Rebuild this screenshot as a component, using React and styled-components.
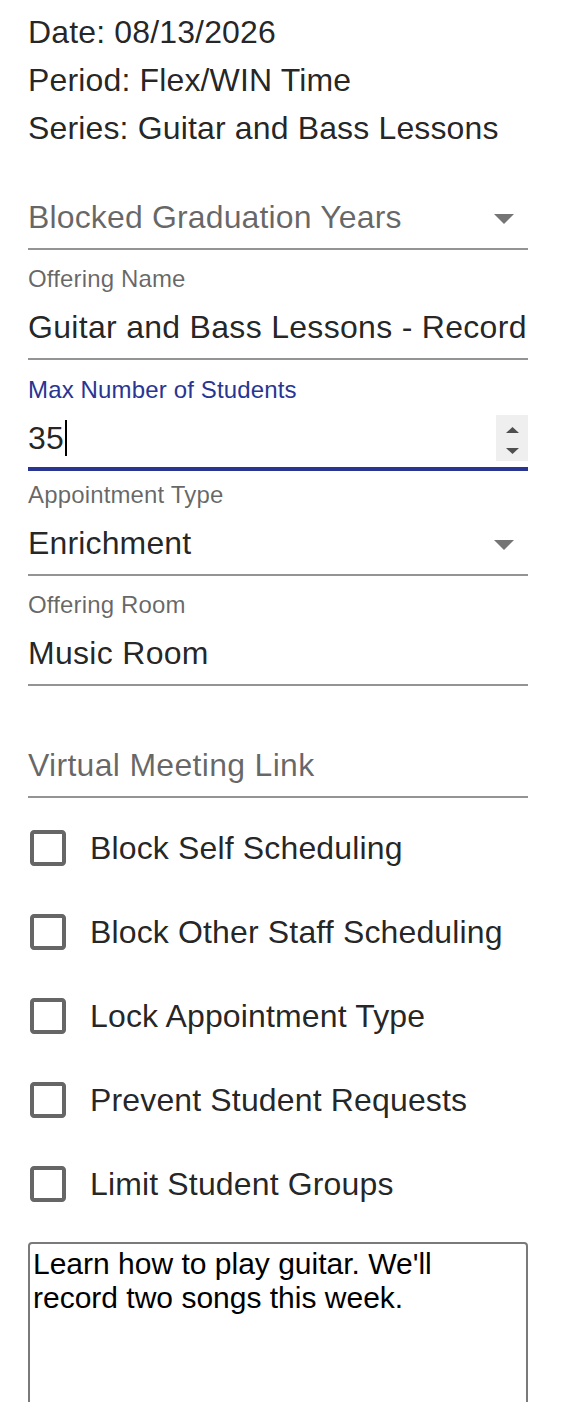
import React from 'react';
import styled, { createGlobalStyle } from 'styled-components';

const GlobalStyle = createGlobalStyle`
  html, body {
    margin: 0;
    padding: 0;
    height: 1402px;
    overflow: hidden;
    background: #fff;
  }
  body {
    font-family: "Liberation Sans", Arial, Helvetica, sans-serif;
  }
`

const Page = styled.div`
  width: 500px;
  padding: 8px 0 0 28px;
  display: flex;
  flex-direction: column;
  letter-spacing: 0.00938em;
`

const Info = styled.div`
  font-size: 32px;
  line-height: 48px;
  color: rgba(0, 0, 0, 0.87);
`

const Field = styled.div`
  margin-top: ${p => (p.$gap ?? 14)}px;
  padding-top: ${p => (p.$bare ? 32 : 0)}px;
`

const FieldLabel = styled.label`
  display: block;
  font-size: 24px;
  line-height: 29px;
  margin-bottom: 3px;
  white-space: nowrap;
  color: ${p => (p.$focused ? '#283593' : 'rgba(0, 0, 0, 0.6)')};
`

const InputRoot = styled.div`
  display: flex;
  align-items: center;
  height: 64px;
  box-sizing: border-box;
  padding-top: 8px;
  padding-bottom: ${p => (p.$focused ? 6 : 8)}px;
  border-bottom: ${p => (p.$focused ? '4px solid #283593' : '2px solid rgba(0, 0, 0, 0.42)')};
`

const TextInput = styled.input`
  flex: 1;
  min-width: 0;
  height: 46px;
  margin: 0;
  padding: 0;
  border: 0;
  outline: none;
  background: transparent;
  font-family: inherit;
  font-size: 32px;
  line-height: 46px;
  letter-spacing: 0.00938em;
  color: rgba(0, 0, 0, 0.87);

  &::placeholder {
    color: rgba(0, 0, 0, 0.6);
    opacity: 1;
  }
`

const SelectText = styled.div`
  flex: 1;
  min-width: 0;
  font-size: 32px;
  line-height: 46px;
  white-space: nowrap;
  overflow: hidden;
  color: ${p => (p.$placeholder ? 'rgba(0, 0, 0, 0.6)' : 'rgba(0, 0, 0, 0.87)')};
`

const ArrowSvg = styled.svg`
  flex-shrink: 0;
  width: 48px;
  height: 48px;
  margin-top: 2px;
  fill: rgba(0, 0, 0, 0.54);
`

const NumberText = styled.div`
  flex: 1;
  display: flex;
  align-items: center;
  height: 46px;
  font-size: 32px;
  line-height: 46px;
  color: rgba(0, 0, 0, 0.87);
`

const Caret = styled.span`
  display: inline-block;
  width: 2px;
  height: 36px;
  margin-left: 1px;
  background: #000;
`

const Spinner = styled.div`
  width: 32px;
  height: 46px;
  flex-shrink: 0;
  background: #efefef;

  svg {
    display: block;
    fill: #4f4f4f;
  }
`

const Checks = styled.div`
  margin-top: 8px;
  margin-left: -22px;
  display: flex;
  flex-direction: column;
`

const CheckRow = styled.label`
  display: flex;
  align-items: center;
  height: 84px;
`

const CheckButton = styled.span`
  display: flex;
  padding: 18px;

  svg {
    width: 48px;
    height: 48px;
    fill: rgba(0, 0, 0, 0.6);
  }
`

const CheckText = styled.span`
  font-size: 32px;
  line-height: 48px;
  color: rgba(0, 0, 0, 0.87);
  white-space: nowrap;
`

const Notes = styled.textarea`
  margin-top: 16px;
  width: 500px;
  height: 320px;
  box-sizing: border-box;
  border: 2px solid #7a7a7a;
  border-radius: 4px;
  padding: 3px;
  font-family: "Liberation Sans", Arial, sans-serif;
  font-size: 30px;
  letter-spacing: normal;
  color: #000;
  background: #fff;
  resize: none;
  outline: none;
`

const DropArrow = () => (
  <ArrowSvg viewBox="0 0 24 24">
    <path d="M7 10l5 5 5-5z" />
  </ArrowSvg>
)

const Box = () => (
  <CheckButton>
    <svg viewBox="0 0 24 24">
      <path d="M19 5v14H5V5h14m0-2H5c-1.11 0-2 .9-2 2v14c0 1.1.89 2 2 2h14c1.1 0 2-.9 2-2V5c0-1.1-.9-2-2-2z" />
    </svg>
  </CheckButton>
)

const options = [
  'Block Self Scheduling',
  'Block Other Staff Scheduling',
  'Lock Appointment Type',
  'Prevent Student Requests',
  'Limit Student Groups',
]

export default function App() {
  return (
    <>
      <GlobalStyle />
      <Page>
        <Info>
          <div>Date: 08/13/2026</div>
          <div>Period: Flex/WIN Time</div>
          <div>Series: Guitar and Bass Lessons</div>
        </Info>

        <Field $gap={2} $bare>
          <InputRoot>
            <SelectText $placeholder>Blocked Graduation Years</SelectText>
            <DropArrow />
          </InputRoot>
        </Field>

        <Field>
          <FieldLabel>Offering Name</FieldLabel>
          <InputRoot>
            <TextInput readOnly value="Guitar and Bass Lessons - Record" />
          </InputRoot>
        </Field>

        <Field $gap={15}>
          <FieldLabel $focused>Max Number of Students</FieldLabel>
          <InputRoot $focused>
            <NumberText>
              35<Caret />
            </NumberText>
            <Spinner>
              <svg width="32" height="46" viewBox="0 0 32 46">
                <polygon points="10,18 23,18 16.5,12" />
                <polygon points="10,33 23,33 16.5,39" />
              </svg>
            </Spinner>
          </InputRoot>
        </Field>

        <Field $gap={9}>
          <FieldLabel>Appointment Type</FieldLabel>
          <InputRoot>
            <SelectText>Enrichment</SelectText>
            <DropArrow />
          </InputRoot>
        </Field>

        <Field>
          <FieldLabel>Offering Room</FieldLabel>
          <InputRoot>
            <TextInput readOnly value="Music Room" />
          </InputRoot>
        </Field>

        <Field $gap={16} $bare>
          <InputRoot>
            <TextInput readOnly placeholder="Virtual Meeting Link" />
          </InputRoot>
        </Field>

        <Checks>
          {options.map(o => (
            <CheckRow key={o}>
              <Box />
              <CheckText>{o}</CheckText>
            </CheckRow>
          ))}
        </Checks>

        <Notes readOnly value="Learn how to play guitar. We'll record two songs this week." />
      </Page>
    </>
  )
}
